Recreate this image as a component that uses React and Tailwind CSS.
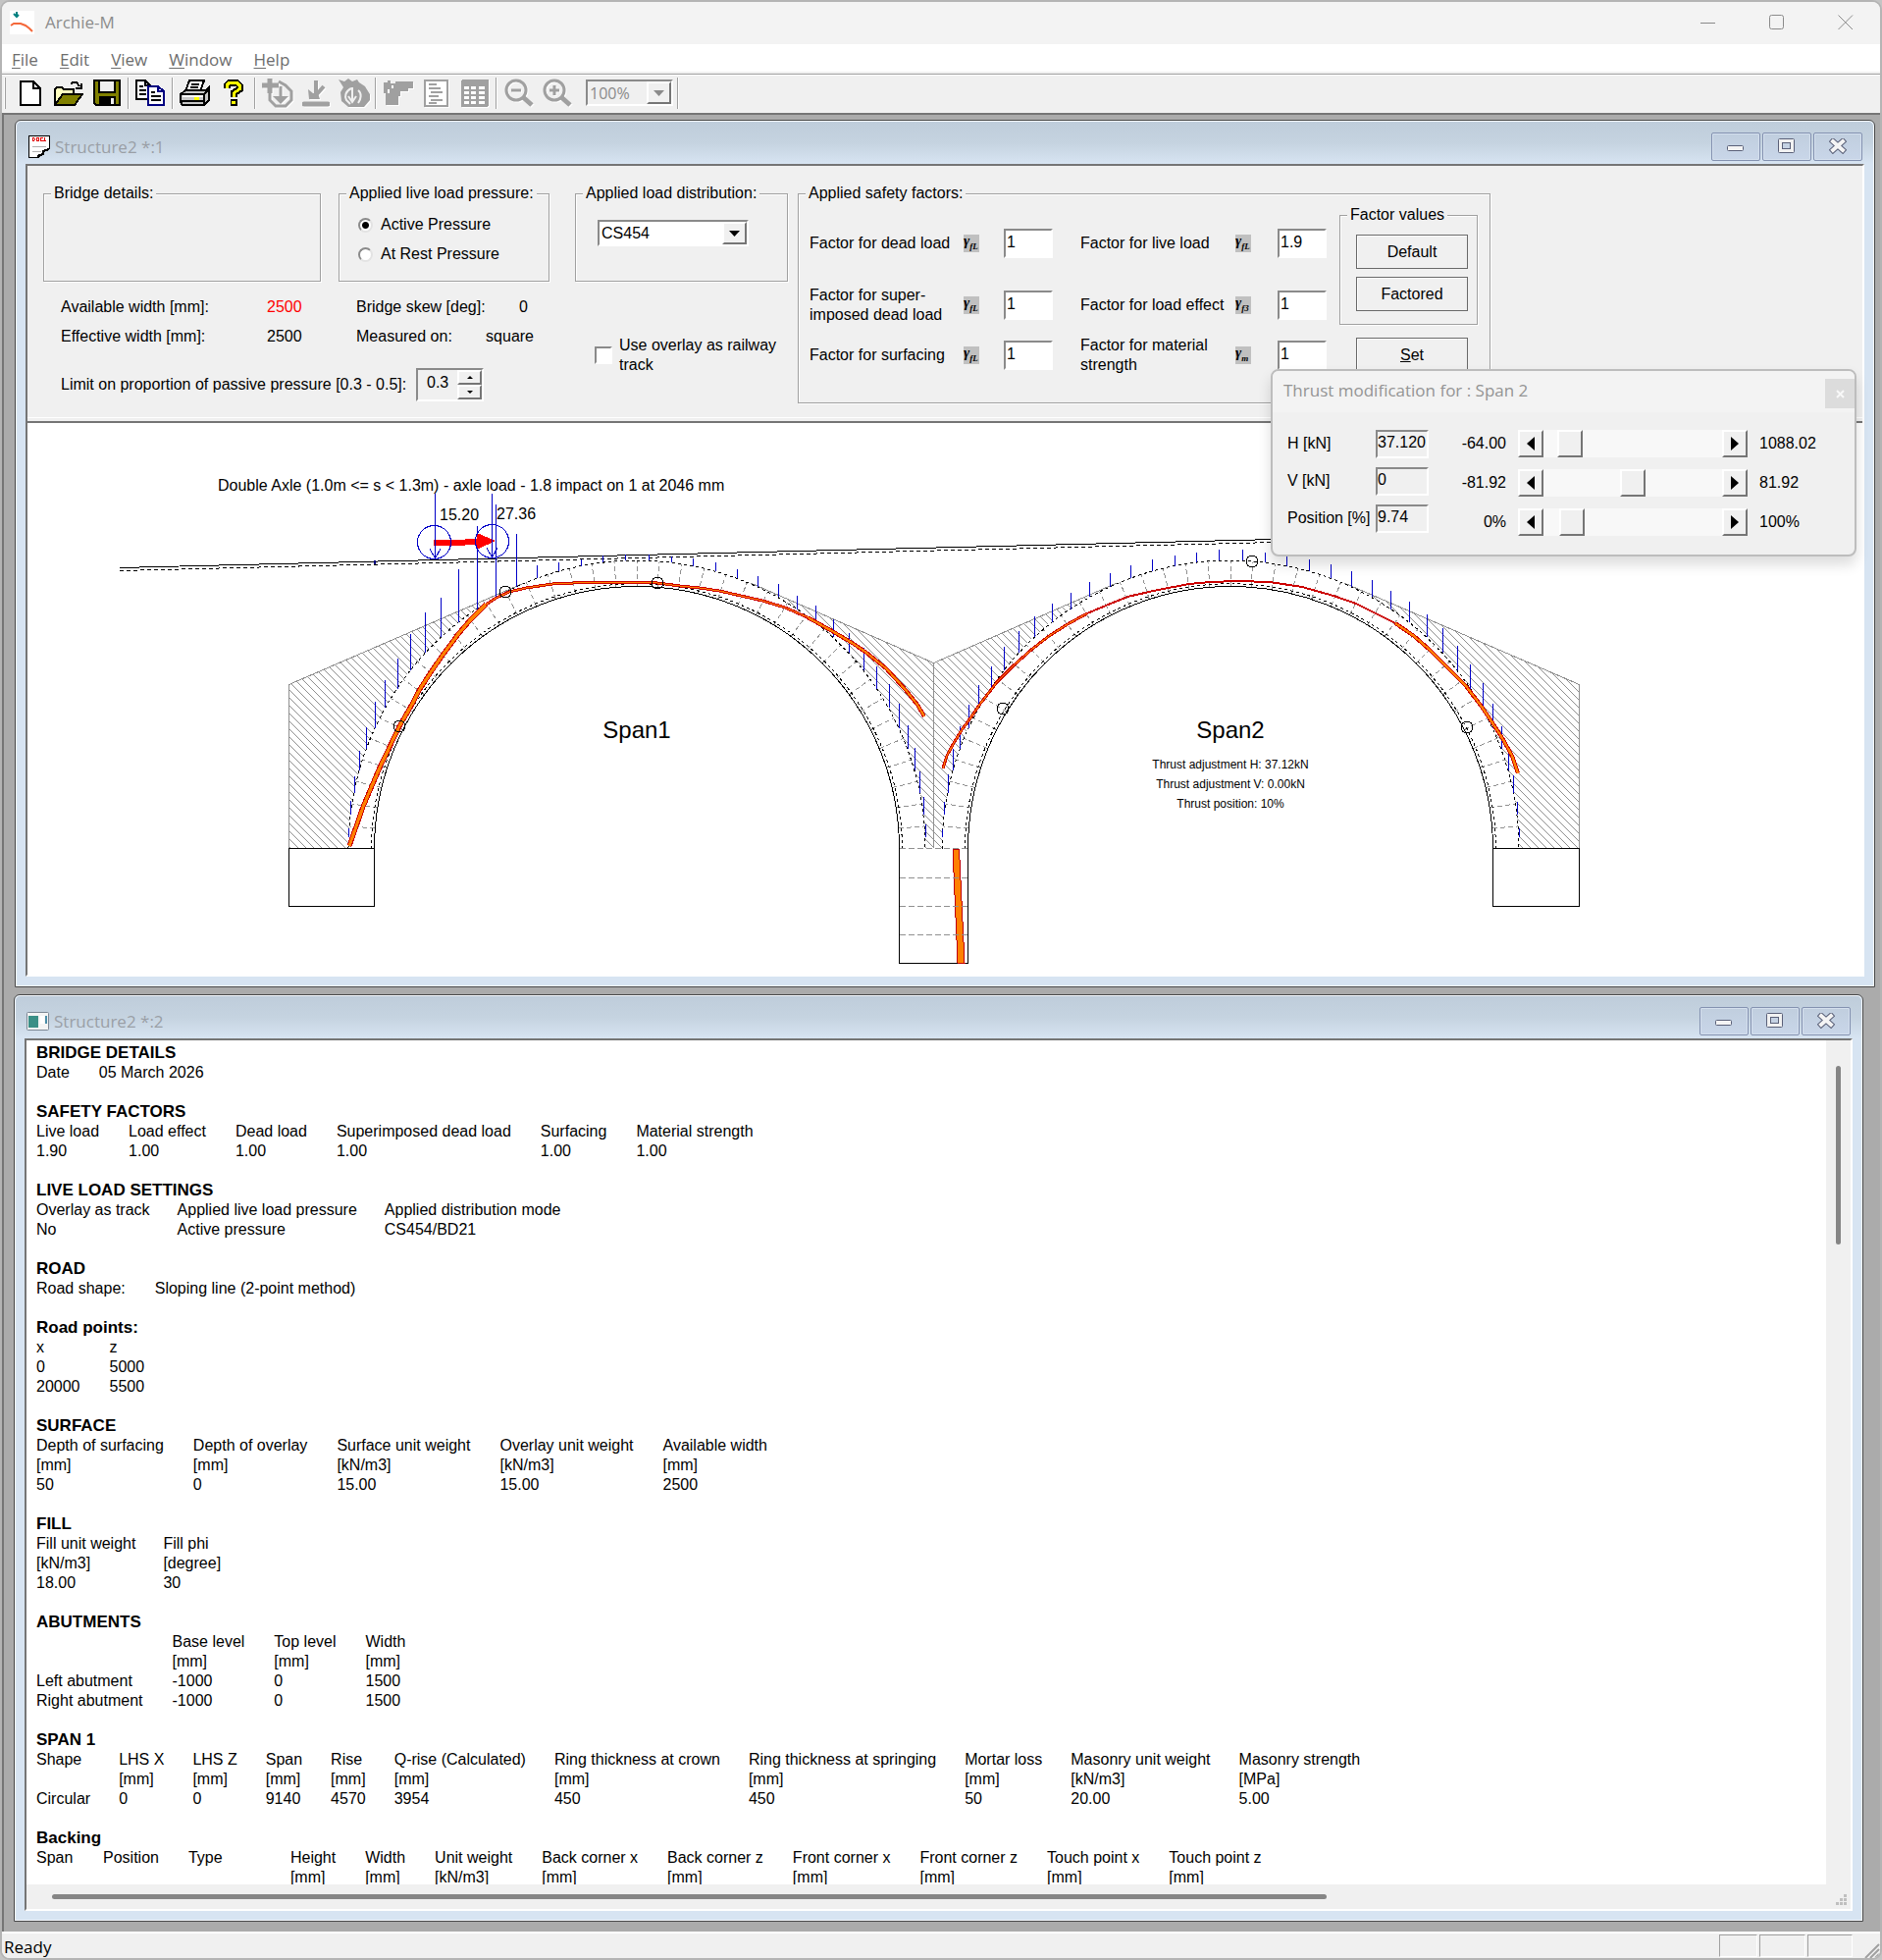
import React, { useState } from "react";

const TOOL_GREY = "#a0a0a0";

/* ---------- bevel helpers ---------- */

const SUNKEN = "border-2 border-t-[#8a8a8a] border-l-[#8a8a8a] border-b-white border-r-white";
const RAISED = "bg-[#f0f0f0] border-2 border-t-white border-l-white border-b-[#757575] border-r-[#757575]";

/* ---------- toolbar icons ---------- */

const NewIcon = () => (
  <svg width="22" height="26" viewBox="0 0 22 26" shapeRendering="crispEdges">
    <path d="M1 1H14L21 8V25H1Z" fill="#fff" stroke="#000" strokeWidth="2" />
    <path d="M14 1V8H21" fill="none" stroke="#000" strokeWidth="2" />
  </svg>
);

const OpenIcon = () => (
  <svg width="30" height="26" viewBox="0 0 30 26" shapeRendering="crispEdges">
    <path d="M1 24V9L3 7H8L10 9H20V14" fill="#ffffc0" stroke="#000" strokeWidth="2" />
    <path d="M1 25L9 14H29L21 25Z" fill="#808000" stroke="#000" strokeWidth="2" />
    <path d="M17 4L19 2H23L26 6M28 3V8H22" fill="none" stroke="#000" strokeWidth="2" />
  </svg>
);

const SaveIcon = () => (
  <svg width="28" height="27" viewBox="0 0 28 27" shapeRendering="crispEdges">
    <path d="M1 1H27V26H3L1 24Z" fill="#808000" stroke="#000" strokeWidth="2" />
    <path d="M6 1H22V13H6Z" fill="#f0f0f0" stroke="#000" strokeWidth="2" />
    <path d="M6 17H23V26H6Z" fill="#000" />
    <path d="M18 19H21V25H18Z" fill="#f0f0f0" />
  </svg>
);

const CopyIcon = () => (
  <svg width="31" height="27" viewBox="0 0 31 27" shapeRendering="crispEdges">
    <path d="M1 1H10L15 6V20H1Z" fill="#fff" stroke="#000" strokeWidth="2" />
    <path d="M10 1V6H15M4 7H8M4 11H11M4 15H11" fill="none" stroke="#000" strokeWidth="2" />
    <path d="M13 7H23L29 12V26H13Z" fill="#fff" stroke="#000080" strokeWidth="2" />
    <path d="M23 7V12H29" fill="none" stroke="#000080" strokeWidth="2" />
    <path d="M16 13H20M16 17H26M16 21H26" fill="none" stroke="#000" strokeWidth="2" />
  </svg>
);

const PrintIcon = () => (
  <svg width="32" height="28" viewBox="0 0 32 28" shapeRendering="crispEdges">
    <path d="M10 1H25L21 12H6Z" fill="#fff" stroke="#000" strokeWidth="2" />
    <path d="M12 5H20M11 8H19" stroke="#000" strokeWidth="2" />
    <path d="M1 15L6 11H27L30 8V21L25 26H3L1 23Z" fill="#c8c8c8" stroke="#000" strokeWidth="2" />
    <path d="M1 15H25L30 10M25 15V26M2 22H25" fill="none" stroke="#000" strokeWidth="2" />
    <path d="M3 16H24V18H3Z" fill="#fff" />
    <path d="M15 18H20V21H15Z" fill="#ff0" />
  </svg>
);

const HelpIcon = () => (
  <svg width="22" height="28" viewBox="0 0 22 28" shapeRendering="crispEdges">
    <path d="M4 9V6L7 3H14L17 6V10L11 14V18" fill="none" stroke="#000" strokeWidth="7" />
    <path d="M8 20H15V27H8Z" fill="#000" />
    <path d="M4 9V6L7 3H14L17 6V10L11 14V18" fill="none" stroke="#ff0" strokeWidth="3" />
    <path d="M9 22H13V25H9Z" fill="#ff0" />
  </svg>
);

const AddLoadIcon = () => (
  <svg width="32" height="30" viewBox="0 0 32 30" fill="none" stroke={TOOL_GREY}>
    <path d="M8 0V15M0 7H17" strokeWidth="5" />
    <path d="M17 3L24 7L30 13V22L24 28H14L8 22V15" strokeWidth="3" />
    <path d="M19 8V24" strokeWidth="3" />
    <path d="M11 18H27L19 26Z" fill={TOOL_GREY} stroke="none" />
  </svg>
);

const DropLoadIcon = () => (
  <svg width="28" height="28" viewBox="0 0 28 28" fill="none" stroke={TOOL_GREY}>
    <path d="M14 1V16M22 7L14 16" strokeWidth="4" />
    <path d="M6 10L7 20H18L16 14L11 14Z" fill={TOOL_GREY} stroke="none" />
    <path d="M2 25H26" strokeWidth="5" strokeLinecap="round" />
  </svg>
);

const MoveLoadIcon = () => (
  <svg width="32" height="30" viewBox="0 0 32 30">
    <path d="M0 1L6 3L10 0L14 3L19 1L21 4L27 8L32 16V22L26 29H10L3 23L2 14L5 9Z" fill={TOOL_GREY} />
    <path d="M13 10C7 13 6 18 8 22L12 26M20 12C24 15 23 21 20 25" fill="none" stroke="#f0f0f0" strokeWidth="2" />
    <path d="M14 9V23M10 18L14 24L18 18" fill="none" stroke="#f0f0f0" strokeWidth="2" />
  </svg>
);

const DrillIcon = () => (
  <svg width="32" height="28" viewBox="0 0 32 28" shapeRendering="crispEdges">
    <path d="M1 3H5V1H8V4H13V2H31V9H26V12H18V17H16V26H3V14H1Z" fill={TOOL_GREY} />
    <path d="M6 10V14M10 6V9" stroke="#fff" strokeWidth="2" />
  </svg>
);

const ReportIcon = () => (
  <svg width="25" height="28" viewBox="0 0 25 28" shapeRendering="crispEdges">
    <path d="M1 1H24V27H1Z" fill="#fff" stroke={TOOL_GREY} strokeWidth="2" />
    <path d="M5 5H13M5 9H17M7 13H19M5 17H15M7 21H19M5 24H13" stroke={TOOL_GREY} strokeWidth="2" />
  </svg>
);

const TableIcon = () => (
  <svg width="28" height="28" viewBox="0 0 28 28" shapeRendering="crispEdges">
    <rect width="28" height="28" rx="2" fill={TOOL_GREY} />
    {[7, 12, 17, 22].map((y) => (
      <path key={y} d={`M3 ${y + 1}H8M10 ${y + 1}H15M18 ${y + 1}H24`} stroke="#fff" strokeWidth="3" />
    ))}
  </svg>
);

const ZoomIcon = ({ plus }) => (
  <svg width="30" height="29" viewBox="0 0 30 29" fill="none" stroke={TOOL_GREY}>
    <circle cx="12" cy="12" r="10" strokeWidth="3" />
    <path d="M19 19L28 27" strokeWidth="5" />
    <path d="M7 12H17" strokeWidth="3" />
    {plus && <path d="M12 7V17" strokeWidth="3" />}
  </svg>
);

const TOOL_GROUPS = [
  [["New", NewIcon], ["Open", OpenIcon], ["Save", SaveIcon]],
  [["Copy", CopyIcon]],
  [["Print", PrintIcon], ["Help", HelpIcon]],
  [["Add load", AddLoadIcon, true], ["Drop load", DropLoadIcon, true], ["Move load", MoveLoadIcon, true]],
  [["Run", DrillIcon, true], ["Report", ReportIcon, true], ["Table", TableIcon, true]],
];

const MENUS = ["File", "Edit", "View", "Window", "Help"];

/* ---------- main window chrome ---------- */

const TitleBar = () => (
  <header className="flex h-[43px] shrink-0 items-center bg-[#f3f3f3] pb-[2px] pl-2">
    <svg className="mr-[11px]" width="25" height="24" viewBox="0 0 25 24">
      <rect width="25" height="24" fill="#fff" />
      <path d="M1 15L4 13H11L16 15L20 18L23 21" fill="none" stroke="#f4683a" strokeWidth="2" />
      <path d="M7 1V6M4 3L7 6L9 4" fill="none" stroke="#008080" strokeWidth="2" />
    </svg>
    <h1 className="flex-1 text-[17px] text-[#8c8c8c]">Archie-M</h1>
    <button aria-label="Minimize" className="flex h-full w-[68px] items-center justify-center">
      <svg width="16" height="16" stroke="#8a8a8a"><path d="M0 8.5H15" /></svg>
    </button>
    <button aria-label="Maximize" className="flex h-full w-[71px] items-center justify-center">
      <svg width="16" height="16" fill="none" stroke="#8a8a8a"><rect x="0.5" y="0.5" width="14" height="14" rx="2" /></svg>
    </button>
    <button aria-label="Close" className="flex h-full w-[70px] items-center justify-center">
      <svg width="16" height="16" stroke="#8a8a8a"><path d="M0.5 0.5L15 15M15 0.5L0.5 15" /></svg>
    </button>
  </header>
);

const MenuBar = () => (
  <nav className="flex h-7 shrink-0 items-center gap-[22px] bg-white pt-1 pl-[10px] text-[17px] text-[#6d6d6d]">
    {MENUS.map((m) => (
      <button key={m}>
        <span className="underline underline-offset-2">{m[0]}</span>
        {m.slice(1)}
      </button>
    ))}
  </nav>
);

const Separator = () => <div className="mx-[2px] h-8 w-[2px] border-l border-[#a0a0a0] bg-white" />;

const Toolbar = ({ zoom, setZoom }) => (
  <div className="flex h-10 shrink-0 items-center border-t border-[#a0a0a0] bg-[#f0f0f0] pb-[2px] pl-[2px] shadow-[inset_0_1px_0_#fff]">
    <div className="mr-[5px] h-8 w-[2px] border-r border-[#a0a0a0] bg-white" />
    {TOOL_GROUPS.map((group, i) => (
      <React.Fragment key={i}>
        {group.map(([name, Icon, disabled]) => (
          <button
            key={name}
            aria-label={name}
            disabled={disabled}
            className="flex w-[39px] items-center justify-center disabled:drop-shadow-[1px_1px_0_#fff]"
          >
            <Icon />
          </button>
        ))}
        <Separator />
      </React.Fragment>
    ))}
    {[false, true].map((plus) => (
      <button
        key={String(plus)}
        aria-label={plus ? "Zoom in" : "Zoom out"}
        disabled
        className="flex w-[39px] items-center justify-center disabled:drop-shadow-[1px_1px_0_#fff]"
      >
        <ZoomIcon plus={plus} />
      </button>
    ))}
    <div className="relative mr-[2px] ml-[10px]">
      <select
        aria-label="Zoom"
        value={zoom}
        onChange={(e) => setZoom(e.target.value)}
        className="block h-[27px] w-[89px] appearance-none border-2 border-[#8a8a8a] border-r-white border-b-white pl-[2px] text-[16px] leading-5 text-[#8a8a8a]"
      >
        <option>100%</option>
        <option>200%</option>
      </select>
      <DropArrow color="#8a8a8a" />
    </div>
    <Separator />
  </div>
);

const DropArrow = ({ color }) => (
  <span className={`pointer-events-none absolute top-[2px] right-[2px] bottom-[2px] flex w-[25px] items-center justify-center ${RAISED}`}>
    <svg width="11" height="6"><path d="M0 0H11L5.5 6Z" fill={color} /></svg>
  </span>
);

const CaptionButton = ({ label, children }) => (
  <button
    aria-label={label}
    className="flex h-[29px] w-[50px] items-center justify-center rounded-[2px] border border-[#8391b0] bg-linear-to-b from-[#c0cede] to-[#c9d6e9] shadow-[inset_0_0_0_1px_#d5e0ee]"
  >
    {children}
  </button>
);

const CaptionButtons = () => (
  <div className="flex gap-[2px]">
    <CaptionButton label="Minimize">
      <svg className="mt-1" width="18" height="7"><rect x="0.5" y="0.5" width="16" height="5" rx="1" fill="#f4f4f4" stroke="#5a6078" /></svg>
    </CaptionButton>
    <CaptionButton label="Restore">
      <svg width="18" height="16" stroke="#5a6078">
        <rect x="0.5" y="0.5" width="16" height="14" rx="1" fill="#f2f2f2" />
        <rect x="4.5" y="4.5" width="8" height="6" fill="#c5d2e3" />
      </svg>
    </CaptionButton>
    <CaptionButton label="Close">
      <svg width="18" height="16" strokeLinecap="square">
        <path d="M4 3L14 12M14 3L4 12" stroke="#5a6078" strokeWidth="6" />
        <path d="M4 3L14 12M14 3L4 12" stroke="#f4f4f4" strokeWidth="4" />
      </svg>
    </CaptionButton>
  </div>
);

const MdiWindow = ({ title, icon, className, children }) => (
  <section className={`flex flex-col rounded-t-[6px] border border-[#4a4a4a] bg-[#d7e4f2] px-[10px] pb-[10px] shadow-[inset_0_0_0_1px_#f3f7fb] ${className}`}>
    <div className="-mx-[9px] mt-px flex h-[43px] shrink-0 items-center rounded-t-[5px] bg-linear-to-b from-[#bfcddb] via-[#c5d3e0] to-[#d7e4f2] pt-[7px] pr-[11px] pl-[11px]">
      {icon}
      <h2 className="flex-1 pt-[2px] text-[17px] leading-6 text-[#9a9fa6]">{title}</h2>
      <CaptionButtons />
    </div>
    <div className="flex min-h-0 flex-1 flex-col border-2 border-t-[#757575] border-r-white border-b-white border-l-[#757575]">
      {children}
    </div>
  </section>
);

/* ---------- input form ---------- */

const GroupBox = ({ title, className, children }) => (
  <fieldset className={`border border-[#a0a0a0] shadow-[1px_1px_0_#fff,inset_1px_1px_0_#fff] ${className}`}>
    <legend className="ml-[7px] bg-[#f0f0f0] px-[3px] leading-5">{title}</legend>
    {children}
  </fieldset>
);

const Radio = ({ label, checked, onChange }) => (
  <label className="flex h-5 items-center gap-2">
    <input
      type="radio"
      name="pressure"
      checked={checked}
      onChange={onChange}
      className="h-[15px] w-[15px] appearance-none rounded-full border-2 border-[#8a8a8a] border-r-[#e3e3e3] border-b-[#e3e3e3] bg-white bg-[radial-gradient(circle,#000_3px,transparent_4px)] not-checked:bg-none"
    />
    {label}
  </label>
);

const Gamma = ({ sub }) => (
  <span className="flex h-[18px] w-4 items-start bg-[#c0c0c0] font-['Liberation_Serif',serif] font-bold italic">
    <span className="text-[15px] leading-3">γ</span>
    <span className="pt-2 text-[9px] leading-[9px]">{sub}</span>
  </span>
);

const Factor = ({ id, label, sub, value, onChange }) => (
  <>
    <label htmlFor={id} className="whitespace-pre-line">{label}</label>
    <Gamma sub={sub} />
    <input
      id={id}
      value={value}
      onChange={(e) => onChange(id, e.target.value)}
      className={`h-[30px] w-[50px] bg-white pb-[2px] pl-px ${SUNKEN}`}
    />
  </>
);

const LEFT_FACTORS = [
  { id: "dead", label: "Factor for dead load", sub: "fL" },
  { id: "superimposed", label: "Factor for super-\nimposed dead load", sub: "fL" },
  { id: "surfacing", label: "Factor for surfacing", sub: "fL" },
];

const RIGHT_FACTORS = [
  { id: "live", label: "Factor for live load", sub: "fL" },
  { id: "effect", label: "Factor for load effect", sub: "f3" },
  { id: "material", label: "Factor for material\nstrength", sub: "m" },
];

const FormButton = ({ children }) => (
  <button className="h-[35px] w-[114px] border border-[#696969] shadow-[inset_1px_1px_0_#fff]">{children}</button>
);

const InputForm = () => {
  const [pressure, setPressure] = useState("active");
  const [railway, setRailway] = useState(false);
  const [limit, setLimit] = useState("0.3");
  const [factors, setFactors] = useState({ dead: "1", superimposed: "1", surfacing: "1", live: "1.9", effect: "1", material: "1" });

  const setFactor = (id, value) => setFactors((f) => ({ ...f, [id]: value }));

  return (
    <form className="flex h-[256px] shrink-0 bg-[#f0f0f0] pt-[18px] pl-4" onSubmit={(e) => e.preventDefault()}>
      <div className="w-[516px]">
        <div className="flex gap-[18px]">
          <GroupBox title="Bridge details:" className="h-[100px] w-[283px]" />
          <GroupBox title="Applied live load pressure:" className="h-[100px] w-[215px]">
            <div className="flex flex-col gap-[10px] pt-3 pl-[19px]">
              <Radio label="Active Pressure" checked={pressure === "active"} onChange={() => setPressure("active")} />
              <Radio label="At Rest Pressure" checked={pressure === "rest"} onChange={() => setPressure("rest")} />
            </div>
          </GroupBox>
        </div>
        <div className="grid grid-cols-[210px_91px_132px_49px] gap-y-[10px] pt-4 pl-[18px] leading-5">
          <span>Available width [mm]:</span>
          <span className="text-[#f00]">2500</span>
          <span>Bridge skew [deg]:</span>
          <span className="pr-[6px] text-right">0</span>
          <span>Effective width [mm]:</span>
          <span>2500</span>
          <span>Measured on:</span>
          <span className="text-right">square</span>
        </div>
        <div className="flex items-center pt-[22px] pl-[18px]">
          <label htmlFor="limit" className="w-[362px]">Limit on proportion of passive pressure [0.3 - 0.5]:</label>
          <div className={`flex h-[34px] w-[69px] ${SUNKEN}`}>
            <input id="limit" value={limit} onChange={(e) => setLimit(e.target.value)} className="w-10 pb-1 pl-[9px]" />
            <div className="flex flex-col">
              <button aria-label="Increase" className={`flex h-[15px] w-[25px] items-center justify-center ${RAISED}`}>
                <svg width="6" height="3"><path d="M0 3H6L3 0Z" /></svg>
              </button>
              <button aria-label="Decrease" className={`flex h-[15px] w-[25px] items-center justify-center ${RAISED}`}>
                <svg width="6" height="3"><path d="M0 0H6L3 3Z" /></svg>
              </button>
            </div>
          </div>
        </div>
      </div>

      <div className="ml-[26px] w-[217px]">
        <GroupBox title="Applied load distribution:" className="h-[100px]">
          <div className="relative mt-[17px] ml-[22px] w-[154px]">
            <select
              aria-label="Applied load distribution"
              className={`block h-[27px] w-full appearance-none bg-white pl-[2px] leading-5 ${SUNKEN}`}
            >
              <option>CS454</option>
              <option>Uniform</option>
            </select>
            <DropArrow color="#000" />
          </div>
        </GroupBox>
        <label className="mt-[55px] ml-5 flex items-center gap-[7px] leading-5">
          <input
            type="checkbox"
            checked={railway}
            onChange={(e) => setRailway(e.target.checked)}
            className={`h-[18px] w-[18px] shrink-0 appearance-none bg-white checked:bg-black ${SUNKEN}`}
          />
          Use overlay as railway track
        </label>
      </div>

      <GroupBox title="Applied safety factors:" className="ml-[10px] h-[224px] w-[706px]">
        <div className="flex pl-[11px] leading-5">
          <div className="grid grid-cols-[157px_41px_78px] grid-rows-[62px_64px_38px] items-center pt-[10px]">
            {LEFT_FACTORS.map((f) => (
              <Factor key={f.id} {...f} value={factors[f.id]} onChange={setFactor} />
            ))}
          </div>
          <div className="grid grid-cols-[158px_43px_63px] grid-rows-[62px_64px_38px] items-center pt-[10px]">
            {RIGHT_FACTORS.map((f) => (
              <Factor key={f.id} {...f} value={factors[f.id]} onChange={setFactor} />
            ))}
          </div>
          <div className="pt-[2px]">
            <GroupBox title="Factor values" className="h-[122px] w-[141px]">
              <div className="flex flex-col gap-2 pt-[10px] pl-4">
                <FormButton>Default</FormButton>
                <FormButton>Factored</FormButton>
              </div>
            </GroupBox>
            <div className="pt-[13px] pl-[17px]">
              <FormButton><u>S</u>et</FormButton>
            </div>
          </div>
        </div>
      </GroupBox>
    </form>
  );
};

/* ---------- arch drawing ---------- */

const SPRING_Y = 865;
const R_IN = 267.5;
const R_MORTAR = 270.4;
const R_OUT = 294;
const SEGMENTS = 40;

// load stick lengths, one per voussoir from the left springing to the right one
const SPAN1_LOADS = [
  9, 14, 17, 20, 22, 27, 28, 31, 37, 41, 40, 54, 85, 94, 54, 13, 9, 7, 7, 6,
  6, 6, 8, 9, 9, 11, 13, 14, 17, 18, 20, 23, 23, 24, 25, 24, 23, 22, 18, 13,
];
const SPAN2_LOADS = [
  8, 13, 19, 22, 23, 24, 23, 23, 24, 22, 21, 19, 17, 15, 14, 13, 12, 11, 10, 11,
  11, 10, 11, 12, 14, 16, 17, 19, 21, 23, 25, 25, 25, 25, 25, 23, 22, 18, 13, 9,
];

const SPAN1_THRUST_A = "356,862 370,822 387,782 398,759 407,740 418,721 428,702 439,685 450,669 467,646 479,632 495,616";
const SPAN1_THRUST_B =
  "495,616 506,609 519,603 536,599 563,595 605,593 649,593 670,594 693,597 713,599 733,602 755,607 777,612 800,619 823,629";
const SPAN1_THRUST_C = "823,629 848,643 870,656 883,665 903,681 923,703 935,718 942,730";
const SPAN2_THRUST_A = "961,783 965,770 972,757 980,744 988,733 999,717 1016,695 1033,678 1051,662 1069,648 1088,636 1108,625";
const SPAN2_THRUST_B =
  "1108,625 1127,617 1149,608 1180,601 1212,595 1233,593 1261,592 1294,593 1327,598 1359,607 1382,615 1404,626 1422,635";
const SPAN2_THRUST_C = "1422,635 1441,648 1457,662 1473,678 1494,699 1510,720 1520,735 1531,752 1541,770 1547,788";

// points, outline width, core width
const THRUSTS = [
  [SPAN1_THRUST_A, 5, 3],
  [SPAN1_THRUST_B, 3, 1],
  [SPAN1_THRUST_C, 4, 2],
  [SPAN2_THRUST_A, 3, 1],
  [SPAN2_THRUST_B, 2, 0],
  [SPAN2_THRUST_C, 4, 2],
];

const HINGES = [[407, 740], [515, 603], [670, 594], [1022, 722], [1276, 572], [1495, 741]];

const point = (cx, r, deg) => {
  const a = (deg * Math.PI) / 180;
  return [cx - r * Math.cos(a), SPRING_Y - r * Math.sin(a)];
};

const Arch = ({ cx, loads }) => {
  const arc = (r) => `M${cx - r} ${SPRING_Y}A${r} ${r} 0 0 1 ${cx + r} ${SPRING_Y}`;
  const step = 180 / SEGMENTS;
  return (
    <g fill="none">
      {Array.from({ length: SEGMENTS - 1 }, (_, i) => {
        const [x1, y1] = point(cx, R_IN, (i + 1) * step);
        const [x2, y2] = point(cx, R_OUT, (i + 1) * step);
        return <line key={i} x1={x1} y1={y1} x2={x2} y2={y2} stroke="#909090" strokeDasharray="5 3" />;
      })}
      <path d={arc(R_IN)} stroke="#000" />
      <path d={arc(R_MORTAR)} stroke="#000" strokeDasharray="3 3" />
      <path d={arc(R_OUT)} stroke="#000" strokeDasharray="3 3" />
      {loads.map((len, i) => {
        const [x, y] = point(cx, R_OUT, (i + 0.5) * step);
        const px = Math.round(x) + 0.5;
        return <line key={i} x1={px} x2={px} y1={y - len} y2={y} stroke="#0000c8" />;
      })}
    </g>
  );
};

const BridgeDrawing = () => (
  <svg
    className="block h-[562px] w-full bg-white font-['Liberation_Sans',sans-serif]"
    viewBox="28 431 1870 562"
    preserveAspectRatio="xMinYMin meet"
    shapeRendering="crispEdges"
  >
    <defs>
      <pattern id="hatch" width="8" height="8" patternUnits="userSpaceOnUse">
        <path d="M-1 -1L9 9M-1 7L1 9M7 -1L9 1" stroke="#909090" />
      </pattern>
    </defs>

    {/* backing */}
    <g fill="url(#hatch)">
      <path d="M294.5 864V697.5L534 594A294 294 0 0 0 355 864Z" />
      <path d="M951.5 864V675.5L765 594A294 294 0 0 1 943 864Z" />
      <path d="M951.5 864V675.5L1138 594A294 294 0 0 0 960 864Z" />
      <path d="M1609.5 864V697.5L1370 594A294 294 0 0 1 1548 864Z" />
    </g>
    <path
      d="M294.5 864V697.5L534 594M951.5 864V675.5L765 594M951.5 675.5L1138 594M1609.5 864V697.5L1370 594"
      fill="none"
      stroke="#909090"
    />

    {/* road line and underside of surfacing */}
    <path d="M122 578.5L1320 549" stroke="#000" />
    <path d="M122 581.5L1320 552" stroke="#000" strokeDasharray="4 3" />
    <rect x="381" y="571" width="2" height="4" fill="#000080" />

    <Arch cx={649} loads={SPAN1_LOADS} />
    <Arch cx={1254} loads={SPAN2_LOADS} />

    {/* abutments and pier */}
    <g fill="none" stroke="#000">
      <rect x="294.5" y="864.5" width="87" height="59" />
      <rect x="1521.5" y="864.5" width="88" height="59" />
      <path d="M916.5 864V981.5H986.5V864" />
    </g>
    <path d="M971 865H977.5L983 981H976Z" fill="#ff8000" stroke="#c00000" />
    <path d="M917 864.5H986M917 894.5H986M917 923.5H986M917 952.5H986" stroke="#909090" strokeDasharray="6 3" />

    {/* thrust lines */}
    <g fill="none" strokeLinejoin="round">
      {THRUSTS.map(([pts, outer, inner]) => (
        <React.Fragment key={pts}>
          <polyline points={pts} stroke="#cc0000" strokeWidth={outer} />
          <polyline points={pts} stroke="#ff8000" strokeWidth={inner} />
        </React.Fragment>
      ))}
    </g>
    {HINGES.map(([x, y]) => (
      <circle key={x} cx={x} cy={y} r="6" fill="none" stroke="#000" />
    ))}

    {/* vehicle */}
    <path d="M442 553.5L490 552" stroke="#f00" strokeWidth="6" />
    <path d="M486 543L505 551L486 560Z" fill="#f00" />
    <g fill="none" stroke="#0000c8">
      <circle cx="442.5" cy="552.5" r="17" />
      <circle cx="501.5" cy="551.5" r="17" />
      <path d="M443.5 503V569M438 559L443.5 569L449 559M501.5 503V568M496 558L501.5 568L507 558" />
    </g>
    <text x="222" y="500" fontSize="16">Double Axle (1.0m &lt;= s &lt; 1.3m) - axle load - 1.8 impact on 1 at 2046 mm</text>
    <text x="448" y="530" fontSize="16">15.20</text>
    <text x="506" y="529" fontSize="16">27.36</text>

    <g textAnchor="middle">
      <text x="649" y="752" fontSize="24">Span1</text>
      <text x="1254" y="752" fontSize="24">Span2</text>
      <text x="1254" y="783" fontSize="12">Thrust adjustment H: 37.12kN</text>
      <text x="1254" y="803" fontSize="12">Thrust adjustment V: 0.00kN</text>
      <text x="1254" y="823" fontSize="12">Thrust position: 10%</text>
    </g>
  </svg>
);

/* ---------- thrust dialog ---------- */

const THRUST_ROWS = [
  { id: "h", label: "H [kN]", value: "37.120", min: "-64.00", max: "1088.02", percent: 9 },
  { id: "v", label: "V [kN]", value: "0", min: "-81.92", max: "81.92", percent: 50 },
  { id: "pos", label: "Position [%]", value: "9.74", min: "0%", max: "100%", percent: 10 },
];

const ScrollSlider = ({ label, percent }) => {
  const [value, setValue] = useState(percent);
  return (
    <div className="flex h-7">
      <button aria-label={`Decrease ${label}`} className={`flex w-[26px] items-center justify-center ${RAISED}`} onClick={() => setValue((v) => v - 1)}>
        <svg width="8" height="14"><path d="M8 0V14L0 7Z" /></svg>
      </button>
      <input
        type="range"
        aria-label={label}
        value={value}
        onChange={(e) => setValue(Number(e.target.value))}
        className="h-7 w-[182px] appearance-none bg-[#f8f8f8] [&::-webkit-slider-thumb]:h-7 [&::-webkit-slider-thumb]:w-[26px] [&::-webkit-slider-thumb]:appearance-none [&::-webkit-slider-thumb]:border-2 [&::-webkit-slider-thumb]:border-t-white [&::-webkit-slider-thumb]:border-r-[#757575] [&::-webkit-slider-thumb]:border-b-[#757575] [&::-webkit-slider-thumb]:border-l-white [&::-webkit-slider-thumb]:bg-[#f0f0f0]"
      />
      <button aria-label={`Increase ${label}`} className={`flex w-[26px] items-center justify-center ${RAISED}`} onClick={() => setValue((v) => v + 1)}>
        <svg width="8" height="14"><path d="M0 0V14L8 7Z" /></svg>
      </button>
    </div>
  );
};

const ThrustDialog = () => (
  <div
    role="dialog"
    aria-label="Thrust modification"
    className="absolute top-[253px] right-[18px] h-[191px] w-[597px] rounded-lg border-2 border-[#bdbdbd] bg-[#f0f0f0] shadow-[0_8px_14px_rgba(0,0,0,0.14)]"
  >
    <div className="flex h-[42px] items-start justify-between rounded-t-md bg-[#f3f3f3] pl-[11px]">
      <h3 className="pt-2 font-['Open_Sans',sans-serif] text-[17px] leading-6 text-[#949494]">Thrust modification for : Span 2</h3>
      <button aria-label="Close" className="mt-2 flex h-[30px] w-[30px] items-center justify-center bg-[#dcdcdc]">
        <svg width="9" height="9" stroke="#f8f8f8" strokeWidth="2"><path d="M1 1L8 8M8 1L1 8" /></svg>
      </button>
    </div>
    <div className="flex pt-[13px] pl-[15px] leading-5">
      <div className="grid auto-rows-[38px] grid-cols-[90px_54px] items-center">
        {THRUST_ROWS.map((r) => (
          <React.Fragment key={r.id}>
            <label htmlFor={r.id}>{r.label}</label>
            <input id={r.id} readOnly value={r.value} className={`h-[29px] pb-[2px] ${SUNKEN}`} />
          </React.Fragment>
        ))}
      </div>
      <div className="-mt-px grid auto-rows-[40px] grid-cols-[79px_234px_80px] items-center gap-x-3">
        {THRUST_ROWS.map((r) => (
          <React.Fragment key={r.id}>
            <span className="text-right">{r.min}</span>
            <ScrollSlider label={r.label} percent={r.percent} />
            <span>{r.max}</span>
          </React.Fragment>
        ))}
      </div>
    </div>
  </div>
);

/* ---------- report ---------- */

const REPORT = [
  { title: "BRIDGE DETAILS", rows: [["Date", "05 March 2026"]] },
  {
    title: "SAFETY FACTORS",
    rows: [
      ["Live load", "Load effect", "Dead load", "Superimposed dead load", "Surfacing", "Material strength"],
      ["1.90", "1.00", "1.00", "1.00", "1.00", "1.00"],
    ],
  },
  {
    title: "LIVE LOAD SETTINGS",
    pad: "pr-7",
    rows: [
      ["Overlay as track", "Applied live load pressure", "Applied distribution mode"],
      ["No", "Active pressure", "CS454/BD21"],
    ],
  },
  { title: "ROAD", rows: [["Road shape:", "Sloping line (2-point method)"]] },
  { title: "Road points:", rows: [["x", "z"], ["0", "5000"], ["20000", "5500"]] },
  {
    title: "SURFACE",
    rows: [
      ["Depth of surfacing", "Depth of overlay", "Surface unit weight", "Overlay unit weight", "Available width"],
      ["[mm]", "[mm]", "[kN/m3]", "[kN/m3]", "[mm]"],
      ["50", "0", "15.00", "15.00", "2500"],
    ],
  },
  { title: "FILL", pad: "pr-7", rows: [["Fill unit weight", "Fill phi"], ["[kN/m3]", "[degree]"], ["18.00", "30"]] },
  {
    title: "ABUTMENTS",
    rows: [
      ["", "Base level", "Top level", "Width"],
      ["", "[mm]", "[mm]", "[mm]"],
      ["Left abutment", "-1000", "0", "1500"],
      ["Right abutment", "-1000", "0", "1500"],
    ],
  },
  {
    title: "SPAN 1",
    pad: "pr-[29px]",
    rows: [
      ["Shape", "LHS X", "LHS Z", "Span", "Rise", "Q-rise (Calculated)", "Ring thickness at crown", "Ring thickness at springing", "Mortar loss", "Masonry unit weight", "Masonry strength"],
      ["", "[mm]", "[mm]", "[mm]", "[mm]", "[mm]", "[mm]", "[mm]", "[mm]", "[kN/m3]", "[MPa]"],
      ["Circular", "0", "0", "9140", "4570", "3954", "450", "450", "50", "20.00", "5.00"],
    ],
  },
  {
    title: "Backing",
    cols: ["w-[68px]", "w-[86px]", "w-[104px]"],
    rows: [
      ["Span", "Position", "Type", "Height", "Width", "Unit weight", "Back corner x", "Back corner z", "Front corner x", "Front corner z", "Touch point x", "Touch point z"],
      ["", "", "", "[mm]", "[mm]", "[kN/m3]", "[mm]", "[mm]", "[mm]", "[mm]", "[mm]", "[mm]"],
    ],
  },
];

const Report = () => (
  <div className="min-h-0 flex-1 overflow-hidden bg-white pt-[3px] pl-[10px] text-[16px] leading-5">
    {REPORT.map(({ title, rows, cols = [], pad = "pr-[30px]" }) => (
      <section key={title} className="mb-5">
        <h3 className="text-[17px] leading-5 font-bold">{title}</h3>
        <table>
          <tbody>
            {rows.map((row, i) => (
              <tr key={i} className="h-5">
                {row.map((cell, j) => (
                  <td key={j} className={`py-0 pl-0 whitespace-nowrap ${pad} ${cols[j] || ""}`}>{cell}</td>
                ))}
              </tr>
            ))}
          </tbody>
        </table>
      </section>
    ))}
  </div>
);

const Grip = () => (
  <svg width="11" height="11" fill="#bfbfbf">
    <path d="M8 0h3v3H8zM4 4h3v3H4zM8 4h3v3H8zM0 8h3v3H0zM4 8h3v3H4zM8 8h3v3H8z" />
  </svg>
);

const ReportIconSmall = () => (
  <svg className="mr-[5px]" width="23" height="19">
    <rect x="0.5" y="0.5" width="22" height="18" rx="1" fill="#f4f4f4" stroke="#7c8794" />
    <rect x="2" y="4" width="10" height="12" fill="#3b8f86" />
    <rect x="14" y="4" width="4" height="8" fill="#fff" />
    <rect x="19" y="4" width="2" height="8" fill="#4b8ea8" />
  </svg>
);

const DocIcon = () => (
  <svg className="mr-1" width="24" height="25" viewBox="0 0 24 25" shapeRendering="crispEdges">
    <path d="M1 1H22V15L17 17L15 21L11 23H1Z" fill="#fff" stroke="#000" />
    <path d="M22 15L16 17V20L12 21L10 24" fill="none" stroke="#000" strokeWidth="2" />
    <path d="M5.5 3V7M5 3.5H7M5 6.5H7M7.5 4V6M9.5 3V7M11.5 3V7M9 3.5H12M9 6.5H12M13.5 3V7M13 3.5H16M13 6.5H16M17.5 3V7M16 6.5H19" fill="none" stroke="#e00000" />
    <path d="M5 12.5H19M5 17.5H14" stroke="#b0b0b0" />
  </svg>
);

const StatusBar = () => (
  <footer className="flex h-[27px] shrink-0 items-center border-t-2 border-white bg-[#f0f0f0] pl-[2px] text-[17px] leading-6">
    <span className="flex-1 pt-[2px]">Ready</span>
    <div className="flex h-[23px] gap-[2px]">
      <div className="w-[39px] border border-[#a0a0a0] border-r-white border-b-white" />
      <div className="w-[47px] border border-[#a0a0a0] border-r-white border-b-white" />
      <div className="w-[46px] border border-[#a0a0a0] border-r-white border-b-white" />
    </div>
    <svg className="ml-3 self-end" width="16" height="15" stroke="#a0a0a0" strokeWidth="2">
      <path d="M1 15L15 1M6 15L15 6M11 15L15 11" />
    </svg>
  </footer>
);

const App = () => {
  const [zoom, setZoom] = useState("100%");

  return (
    <div className="h-screen bg-[#c4c4c4]">
      <div className="flex h-full flex-col overflow-hidden rounded-[10px] border-2 border-[#b4b4b4] bg-[#f0f0f0] font-['Open_Sans',sans-serif] text-black">
        <TitleBar />
        <MenuBar />
        <div className="h-[2px] shrink-0" />
        <Toolbar zoom={zoom} setZoom={setZoom} />

        <main className="flex min-h-0 flex-1 flex-col gap-[7px] border-t-2 border-l-2 border-[#757575] bg-[#ababab] pt-[5px] pr-[5px] pb-[10px] pl-[10px]">
          <MdiWindow title="Structure2 *:1" icon={<DocIcon />} className="relative ml-px shrink-0">
            <div className="font-['Liberation_Sans',sans-serif] text-[16px]">
              <InputForm />
              <div className="h-[6px] border-t border-b-2 border-t-white border-b-[#757575] bg-[#f0f0f0]" />
              <BridgeDrawing />
              <ThrustDialog />
            </div>
          </MdiWindow>

          <MdiWindow title="Structure2 *:2" icon={<ReportIconSmall />} className="mr-3 min-h-0 flex-1">
            <div className="flex min-h-0 flex-1 font-['Liberation_Sans',sans-serif]">
              <Report />
              <div className="w-[25px] bg-[#f0f0f0] pt-[26px] pl-[10px]">
                <div className="h-[182px] w-[5px] rounded-full bg-[#858585]" />
              </div>
            </div>
            <div className="flex h-[25px] shrink-0 items-center bg-[#f0f0f0] pr-1 pl-[26px]">
              <div className="h-[5px] w-[71%] rounded-full bg-[#858585]" />
              <div className="ml-auto self-end pb-1"><Grip /></div>
            </div>
          </MdiWindow>
        </main>

        <StatusBar />
      </div>
    </div>
  );
};

export default App;
